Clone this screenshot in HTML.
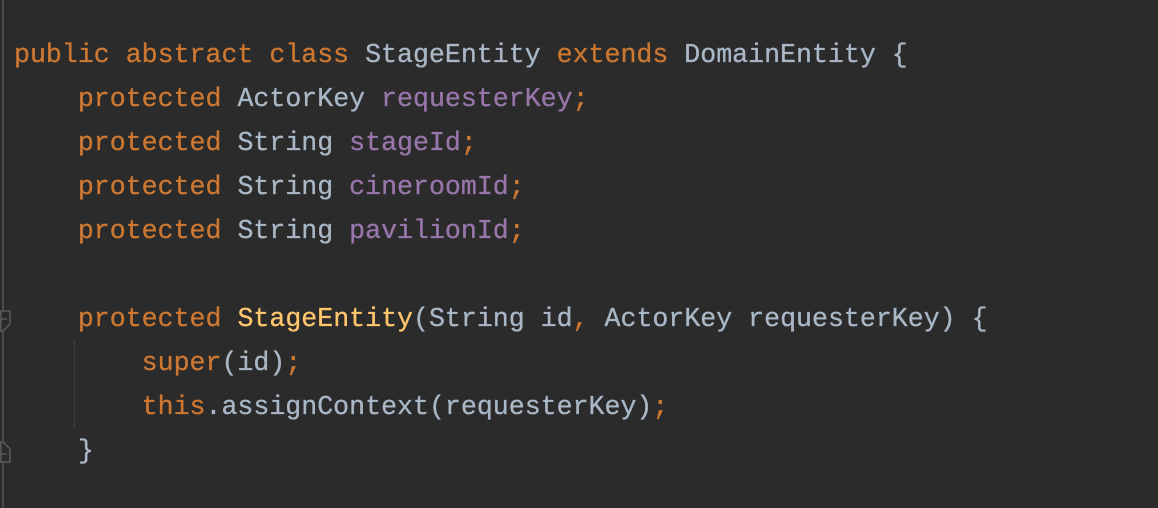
<!DOCTYPE html>
<html><head><style>
html,body{margin:0;padding:0;background:#2b2b2b;width:1158px;height:508px;overflow:hidden}
.g{position:absolute;left:2px;top:0;width:2px;height:508px;background:#4a4a4a}
.ig{position:absolute;left:74px;top:340px;width:1px;height:88px;background:#3f3f3f}
svg{position:absolute;left:0}
pre{position:absolute;left:14px;top:33px;margin:0;font-family:"Liberation Mono",monospace;font-size:26.6px;line-height:44px;color:#a9b7c6;-webkit-text-stroke:0.3px currentColor}
.k{color:#cc7832}.p{color:#9876aa}.m{color:#ffc66d}
</style></head><body>
<div class="g"></div>
<svg style="top:310px" width="14" height="26"><path d="M0.8 1 H10 V14 L3 21 L0.8 21 Z" fill="#2b2b2b" stroke="#5a5a5a" stroke-width="1.5"/><path d="M1 9 H7" stroke="#5a5a5a" stroke-width="1.5"/></svg>
<svg style="top:437px" width="14" height="26"><path d="M0.8 25 H10 V12 L3 5 L0.8 5 Z" fill="#2b2b2b" stroke="#5a5a5a" stroke-width="1.5"/><path d="M1 17 H7" stroke="#5a5a5a" stroke-width="1.5"/></svg>
<div class="ig"></div>
<pre><span class="k">public abstract class</span> StageEntity <span class="k">extends</span> DomainEntity {
    <span class="k">protected</span> ActorKey <span class="p">requesterKey</span><span class="k">;</span>
    <span class="k">protected</span> String <span class="p">stageId</span><span class="k">;</span>
    <span class="k">protected</span> String <span class="p">cineroomId</span><span class="k">;</span>
    <span class="k">protected</span> String <span class="p">pavilionId</span><span class="k">;</span>

    <span class="k">protected</span> <span class="m">StageEntity</span>(String id<span class="k">,</span> ActorKey requesterKey) {
        <span class="k">super</span>(id)<span class="k">;</span>
        <span class="k">this</span>.assignContext(requesterKey)<span class="k">;</span>
    }</pre>
</body></html>
